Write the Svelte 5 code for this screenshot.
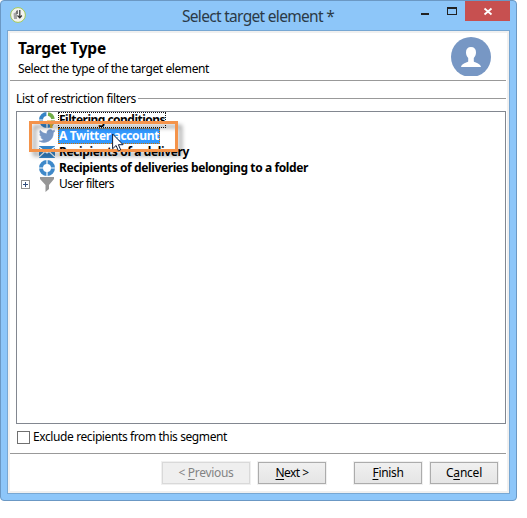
<script>
  const rows = [
    { label: 'Filtering conditions', width: 106, icon: 'filtering', bold: true, focused: true },
    { label: 'A Twitter account', width: 100, icon: 'twitter', bold: true, selected: true },
    { label: 'Recipients of a delivery', width: 130, icon: 'mail', bold: true },
    { label: 'Recipients of deliveries belonging to a folder', width: 249, icon: 'ring', bold: true },
    { label: 'User filters', width: 55, icon: 'funnel', expandable: true }
  ];

  const buttons = [
    { pre: '< ', key: 'P', post: 'revious', width: 55, kind: 'previous' },
    { pre: '', key: 'N', post: 'ext >', width: 33, kind: 'next' },
    { pre: '', key: 'F', post: 'inish', width: 31, kind: 'finish' },
    { pre: 'C', key: 'a', post: 'ncel', width: 36, kind: 'cancel' }
  ];

  // Spreads the label's tracking so that it takes the given width.
  function fit(node, width) {
    const natural = node.getBoundingClientRect().width;
    node.style.letterSpacing = `${(width - natural) / node.textContent.length}px`;
  }
</script>

<div class="window">
  <header class="titlebar">
    <svg class="app" width="18" height="18" viewBox="0 0 18 18">
      <circle cx="9" cy="9" r="7.400" fill="#f3f3ee" stroke="#a3c957" stroke-width="1" />
      <path d="M4.500 7.500L8 5.500V13H5z" fill="#a5a5a5" />
      <path d="M7 5l2-1v4H7z" fill="#777" />
      <path d="M10.800 4v7.500M8.500 9.500l2.300 2.300 2-2.300" fill="none" stroke="#333" stroke-width="1.200" />
    </svg>
    <h1><span use:fit={152}>Select target element *</span></h1>
    <svg class="controls" width="94" height="20" viewBox="0 0 94 20">
      <rect x="5" y="12" width="8" height="2" fill="#222" />
      <path d="M31 6h10v8H31zM32 8v5h8V8z" fill="#222" fill-rule="evenodd" />
      <rect x="49" width="45" height="20" fill="#c75050" />
      <path d="M68.500 7.500l7 6M75.500 7.500l-7 6" stroke="#fff" stroke-width="1.800" />
    </svg>
  </header>

  <main>
    <section class="head">
      <div>
        <h2><span use:fit={88}>Target Type</span></h2>
        <p><span use:fit={191}>Select the type of the target element</span></p>
      </div>
      <svg width="40" height="39" viewBox="0 0 40 39">
        <circle cx="20" cy="20" r="20" fill="#7797c4" />
        <path d="M20 10c3.200 0 5 2 5 5.200 0 2.300-.8 4.200-2.200 5.800v3.400c1 1.200 6.700 1.600 7.200 5.600H10c.5-4 6.200-4.400 7.200-5.600V21C15.800 19.400 15 17.500 15 15.200 15 12 16.800 10 20 10z" fill="#fff" />
      </svg>
    </section>

    <div class="legend"><span use:fit={120}>List of restriction filters</span><i></i></div>

    <div class="tree">
      {#each rows as row}
        <div class="row">
          <span class="expander">
            {#if row.expandable}
              <svg width="9" height="9"><rect x=".5" y=".5" width="8" height="8" fill="#fff" stroke="#919191" /><path d="M2 4.500h5M4.500 2v5" stroke="#34507f" /></svg>
            {/if}
          </span>
          <svg class="icon" width="16" height="16" viewBox="0 0 16 16">
            {#if row.icon === 'filtering'}
              <circle cx="8" cy="8" r="6" fill="none" stroke="#3584c6" stroke-width="4" />
              <path d="M8 0h8v8H8z" fill="#fff" />
              <path d="M9 2a6 6 0 0 1 5 5" fill="none" stroke="#71ad48" stroke-width="3.500" />
              <path d="M8 0v16M0 8h16" stroke="#fff" stroke-width="1.200" />
              <path d="M8 8.500h8V11l-2.500 2v3h-2.500v-3L8 11z" fill="#e3b32e" />
            {:else if row.icon === 'twitter'}
              <path d="M16 3.200c-.6.3-1.200.4-1.800.5.700-.4 1.100-1 1.400-1.700-.6.4-1.300.6-2 .8A3.200 3.200 0 0 0 8 5.700C5.300 5.600 2.800 4.300 1.200 2.300c-.9 1.500-.4 3.300 1 4.200-.5 0-1-.1-1.400-.4 0 1.600 1.100 2.800 2.500 3.200-.5.1-1 .1-1.400 0 .4 1.300 1.600 2.200 3 2.200A6.500 6.500 0 0 1 0 13 9.300 9.300 0 0 0 14.300 4.800c.7-.4 1.300-1 1.700-1.600z" fill="#7797c4" stroke="#7797c4" stroke-width=".5" />
            {:else if row.icon === 'mail'}
              <rect y="2" width="16" height="12" fill="#3584c6" />
              <path d="M0 3l8 6 8-6M0 13l5.500-5M16 13l-5.500-5" fill="none" stroke="#fff" stroke-width="1.100" />
            {:else if row.icon === 'ring'}
              <circle cx="8" cy="8" r="6" fill="none" stroke="#3f89c9" stroke-width="4" />
              <path d="M8 0v16M0 8h16" stroke="#fff" stroke-width="1.200" />
            {:else}
              <path d="M1 1h14v2L10 9v4l-3.500 3V9L1 3z" fill="#969696" />
            {/if}
          </svg>
          <span class="label" class:bold={row.bold} class:selected={row.selected} class:focused={row.focused}>
            <span use:fit={row.width}>{row.label}</span>
          </span>
        </div>
      {/each}

      <div class="highlight"></div>
      <svg class="cursor" width="12" height="19" viewBox="0 0 12 19">
        <path d="M.6 1v14.800l3.500-3.300 2.300 5.400 2.300-1-2.300-5.200h4.700z" fill="#fff" stroke="#111c38" stroke-width="1" />
      </svg>
    </div>

    <label class="exclude"><i></i><span use:fit={194}>Exclude recipients from this segment</span></label>

    <footer>
      {#each buttons as b}
        <button class={b.kind} disabled={b.kind === 'previous'}><span use:fit={b.width}>{b.pre}<u>{b.key}</u>{b.post}</span></button>
      {/each}
    </footer>
  </main>
</div>

<style>
  :global(body) { margin: 0; background: #fff; }
  .window, .window * { box-sizing: border-box; }
  .window {
    width: 517px;
    height: 501px;
    padding: 0 7px 7px 6px;
    border: 1px solid #6b98c4;
    border-radius: 4px;
    background: #8dc6f9;
    color: #000;
    font: 12px/16px "Noto Sans", "Open Sans", sans-serif;
    white-space: nowrap;
  }
  h1, h2, p { margin: 0; font-weight: 400; }
  svg { display: block; flex: none; }
  .titlebar { display: flex; height: 29px; width: 502px; margin-left: 1px; }
  .app { margin: 5px 0 0 1px; }
  h1 { flex: 1; padding-left: 155px; font-size: 15.500px; line-height: 30px; color: #2b3a47; }
  main {
    width: 503px;
    height: 464px;
    display: flex;
    flex-direction: column;
    border: 1px solid #77a7d3;
    background: #fff;
    box-shadow: inset 0 0 0 2px #f0f0f0;
    padding: 0 3px 0 2px;
  }
  .head {
    display: flex;
    justify-content: space-between;
    height: 50px;
    padding: 6px 15px 0 8px;
    border-bottom: 1px solid #999;
  }
  h2 { font-size: 15.500px; font-weight: 700; line-height: 22px; }
  p { padding-top: 2px; }
  .legend { display: flex; align-items: center; height: 30px; margin-left: 6px; padding-top: 5px; }
  .legend i { flex: 1; height: 1px; margin-left: 2px; background: #999; }
  .tree {
    position: relative;
    height: 313px;
    margin-left: 6px;
    border: 1px solid #828790;
    background: #fff;
  }
  .row { display: flex; align-items: center; height: 16px; }
  .expander { width: 22px; padding-left: 4px; }
  .label { height: 16px; margin-left: 3px; padding: 0 1px; line-height: 16px; }
  .bold { font-weight: 700; }
  .selected { color: #fff; background: #3399ff; outline: 1px dotted #cf7300; outline-offset: -1px; }
  .focused { outline: 1px dotted #111; outline-offset: -1px; }
  .highlight {
    position: absolute;
    left: 12px;
    top: 9px;
    width: 149px;
    height: 31px;
    border: 3.500px solid #f4934a;
    filter: drop-shadow(4px 4px 2px rgba(0, 0, 0, .38));
  }
  .cursor { position: absolute; left: 95px; top: 21px; }
  .exclude { display: flex; align-items: center; height: 29px; margin-left: 7px; padding-bottom: 4px; padding-top: 1px; }
  .exclude i { width: 13px; height: 13px; margin-right: 3px; border: 1px solid #707070; background: #fff; }
  footer { display: flex; height: 32px; padding: 8px 0 0 152px; border-top: 1px solid #999; }
  button {
    width: 68px;
    height: 22px;
    margin: 0 8px 0 0;
    padding: 0;
    border: 1px solid #acacac;
    background: linear-gradient(#f0f0f0, #e5e5e5);
    box-shadow: 0 0 0 1px #f0f0f0;
    color: #000;
    font: inherit;
    line-height: 20px;
    flex: none;
  }
  .previous { width: 88px; border-color: #d9d9d9; background: #efefef; color: #838383; }
  .next { margin-right: 28px; }
  u { text-underline-offset: 2px; }
</style>
